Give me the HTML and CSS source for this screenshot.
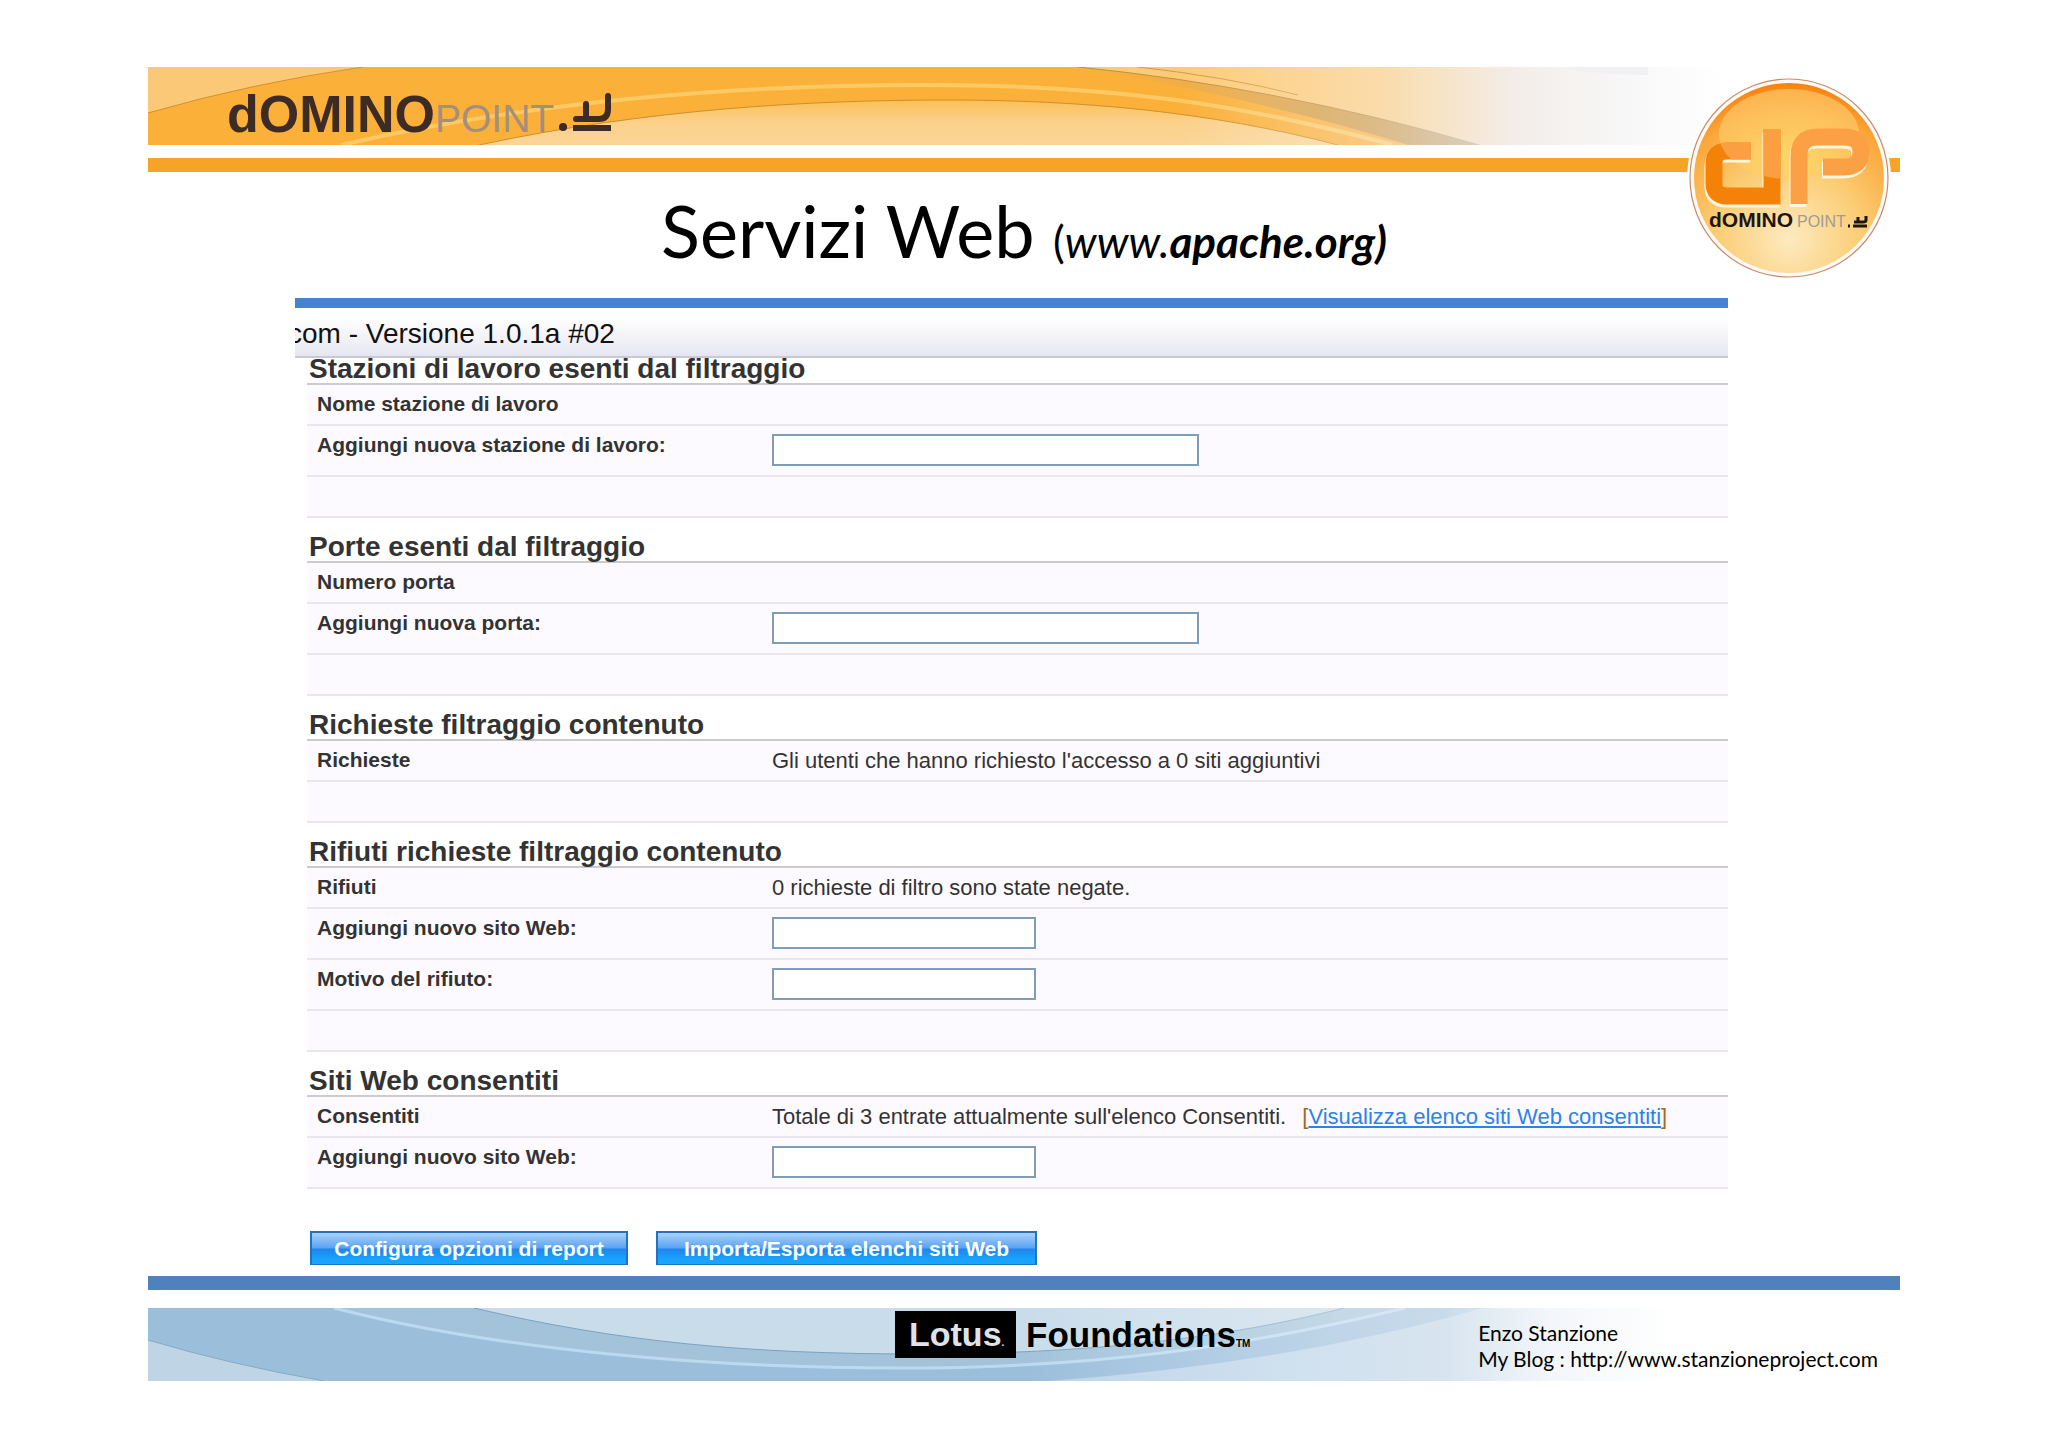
FILE: index.html
```html
<!DOCTYPE html>
<html lang="it">
<head>
<meta charset="utf-8">
<title>Servizi Web</title>
<link rel="stylesheet" href="styles.css">
</head>
<body>
<div class="slide">
  <header class="masthead">
    <div class="banner">
      <svg class="waves" viewBox="0 0 1752 78" preserveAspectRatio="none" aria-hidden="true">
        <defs>
          <linearGradient id="fadeTop" x1="0" x2="1752" y1="0" y2="0" gradientUnits="userSpaceOnUse">
            <stop offset=".59" stop-color="#fff" stop-opacity="0"/>
            <stop offset=".7" stop-color="#f6f2f0" stop-opacity=".4"/>
            <stop offset=".78" stop-color="#f1f0f3" stop-opacity=".92"/>
            <stop offset=".86" stop-color="#fafafb" stop-opacity="1"/>
            <stop offset=".9" stop-color="#fff"/>
          </linearGradient>
          <linearGradient id="under" x1="0" x2="0" y1="0" y2="1">
            <stop offset="0" stop-color="#fcbf58"/>
            <stop offset=".5" stop-color="#fbd18b"/>
            <stop offset="1" stop-color="#fad596"/>
          </linearGradient>
          <linearGradient id="band" x1="0" x2="1" y1="0" y2="0">
            <stop offset="0" stop-color="#c9a468" stop-opacity="0"/>
            <stop offset=".6" stop-color="#bba27a" stop-opacity=".45"/>
            <stop offset="1" stop-color="#b9b5b0" stop-opacity=".45"/>
          </linearGradient>
        </defs>
        <rect width="1752" height="78" fill="#fbb03a"/>
        <path d="M0 0H215Q104 16 0 46Z" fill="#fbc877"/>
        <path d="M0 46Q104 16 215 0" fill="none" stroke="#cf9333"/>
        <path d="M930 0Q1130 20 1332 78H1752V0Z" fill="#fdcb78"/>
        <path d="M331 78C500 42 660 33 800 33C930 33 1060 44 1190 78Z" fill="url(#under)"/>
        <path d="M331 78C500 42 660 33 800 33C930 33 1060 44 1190 78" fill="none" stroke="#cc902c"/>
        <path d="M193 78C420 26 640 18 780 18C960 18 1090 36 1245 78" fill="none" stroke="#fdc964" stroke-width="4"/>
        <path d="M930 0Q1130 20 1332 78" fill="none" stroke="#bf8f42"/>
        <path d="M990 0Q1080 10 1150 28" fill="none" stroke="#d19b45"/>
        <rect width="1752" height="78" fill="url(#fadeTop)"/>
        <path d="M930 0Q1130 20 1332 78H1260Q1120 34 930 0Z" fill="url(#band)"/>
        <path d="M1405 0H1500V8Q1450 8 1405 0Z" fill="#f1f1f4"/>
      </svg>
      <div class="wordmark">
        <span class="word-strong">dOMINO</span><span class="word-light">POINT</span>
        <svg class="tld" viewBox="0 0 54 40" aria-label="it" role="img">
          <g fill="none" stroke="#3d2b26" stroke-width="6" stroke-linecap="round">
            <path d="M50 4V17Q50 27 41 27H18M28 12V26"/>
            <path d="M15 36H53" stroke-linecap="butt"/>
            <path d="M5 35H5.1" stroke-width="8"/>
          </g>
        </svg>
      </div>
    </div>
    <div class="rule rule-orange"></div>
    <svg class="emblem" viewBox="0 0 220 220" role="img" aria-label="dominopoint">
      <defs>
        <radialGradient id="disc" cx=".5" cy=".82" r=".85">
          <stop offset="0" stop-color="#fdeac0"/>
          <stop offset=".45" stop-color="#fbcd74"/>
          <stop offset=".8" stop-color="#fba63a"/>
          <stop offset="1" stop-color="#f77a05"/>
        </radialGradient>
        <radialGradient id="gloss" cx=".5" cy=".75" r=".8">
          <stop offset="0" stop-color="#ffd96a"/>
          <stop offset="1" stop-color="#fdbb5c"/>
        </radialGradient>
        <clipPath id="glossClip"><ellipse cx="109" cy="64" rx="70" ry="45"/></clipPath>
      </defs>
      <circle cx="109" cy="108" r="102" fill="#fff"/>
      <circle cx="109" cy="108" r="99" fill="#fffaf5" stroke="#c98a6c" stroke-width="1.2"/>
      <circle cx="109" cy="108" r="95" fill="url(#disc)"/>
      <ellipse cx="109" cy="64" rx="70" ry="45" fill="url(#gloss)" opacity=".8"/>
      <g fill="none" stroke-width="17">
        <g stroke="#fff6e0" transform="translate(-1 3)">
          <path d="M71 81H47Q34 81 34 94V113Q34 126 47 126H92V59"/>
          <path d="M119 134V86Q119 67 138 67H164Q181 67 181 82Q181 97 164 97H143"/>
        </g>
        <path d="M71 81H47Q34 81 34 94V113Q34 126 47 126H92V59" stroke="#f58208"/>
        <path d="M119 134V86Q119 67 138 67H164Q181 67 181 82Q181 97 164 97H143" stroke="#fba045"/>
        <path d="M71 81H47Q34 81 34 94V113Q34 126 47 126H92V59" stroke="#fb9f42" clip-path="url(#glossClip)"/>
      </g>
      <text class="emblem-strong" x="29" y="157">dOMINO</text>
      <text class="emblem-light" x="117" y="157">POINT</text>
      <path d="M186 146V150Q186 152 183 152H174M178 147V152M173 156H187M168 156H170" fill="none" stroke="#1d1512" stroke-width="3"/>
    </svg>
  </header>

  <h1 class="title">Servizi Web <span class="title-site"><span class="paren">(</span>www.<b>apache.org)</b></span></h1>

  <main class="panel">
    <div class="strip"></div>
    <div class="version">com - Versione 1.0.1a #02</div>
    <form class="form">
      <section class="group group-first">
        <h2>Stazioni di lavoro esenti dal filtraggio</h2>
        <table>
          <tr><th scope="row">Nome stazione di lavoro</th><td></td></tr>
          <tr class="tall"><th scope="row"><label for="station">Aggiungi nuova stazione di lavoro:</label></th><td><input class="wide" id="station" type="text"></td></tr>
          <tr><td colspan="2"></td></tr>
        </table>
      </section>
      <section class="group">
        <h2>Porte esenti dal filtraggio</h2>
        <table>
          <tr><th scope="row">Numero porta</th><td></td></tr>
          <tr class="tall"><th scope="row"><label for="port">Aggiungi nuova porta:</label></th><td><input class="wide" id="port" type="text"></td></tr>
          <tr><td colspan="2"></td></tr>
        </table>
      </section>
      <section class="group">
        <h2>Richieste filtraggio contenuto</h2>
        <table>
          <tr><th scope="row">Richieste</th><td>Gli utenti che hanno richiesto l'accesso a 0 siti aggiuntivi</td></tr>
          <tr><td colspan="2"></td></tr>
        </table>
      </section>
      <section class="group">
        <h2>Rifiuti richieste filtraggio contenuto</h2>
        <table>
          <tr><th scope="row">Rifiuti</th><td>0 richieste di filtro sono state negate.</td></tr>
          <tr class="tall"><th scope="row"><label for="denied">Aggiungi nuovo sito Web:</label></th><td><input id="denied" type="text"></td></tr>
          <tr class="tall"><th scope="row"><label for="reason">Motivo del rifiuto:</label></th><td><input id="reason" type="text"></td></tr>
          <tr><td colspan="2"></td></tr>
        </table>
      </section>
      <section class="group">
        <h2>Siti Web consentiti</h2>
        <table>
          <tr><th scope="row">Consentiti</th><td>Totale di 3 entrate attualmente sull'elenco Consentiti. <span class="bracket">[<a href="#consentiti">Visualizza elenco siti Web consentiti</a>]</span></td></tr>
          <tr class="tall"><th scope="row"><label for="allowed">Aggiungi nuovo sito Web:</label></th><td><input id="allowed" type="text"></td></tr>
        </table>
      </section>
      <div class="actions">
        <button class="btn-report" type="button">Configura opzioni di report</button>
        <button class="btn-import" type="button">Importa/Esporta elenchi siti Web</button>
      </div>
    </form>
  </main>

  <div class="rule rule-blue"></div>
  <footer class="footer">
    <svg class="waves" viewBox="0 0 1752 73" preserveAspectRatio="none" aria-hidden="true">
      <defs>
        <linearGradient id="fadeBottom" x1="0" x2="1752" y1="0" y2="0" gradientUnits="userSpaceOnUse">
          <stop offset=".5" stop-color="#fff" stop-opacity="0"/>
          <stop offset=".74" stop-color="#eef2f7" stop-opacity=".55"/>
          <stop offset=".8" stop-color="#f6f8fb" stop-opacity=".95"/>
          <stop offset=".87" stop-color="#fff"/>
        </linearGradient>
      </defs>
      <rect width="1752" height="73" fill="#9bbedb"/>
      <path d="M0 32Q80 56 176 73H0Z" fill="#bfd5e6"/>
      <path d="M0 32Q80 56 176 73" fill="none" stroke="#86abc4"/>
      <path d="M186 0C350 42 560 60 752 60C950 60 1100 38 1257 0Z" fill="#a3c3da"/>
      <path d="M326 0C470 34 600 46 770 46C940 46 1080 30 1196 0Z" fill="#c9dcea"/>
      <path d="M900 73Q1140 56 1335 0H1752V73Z" fill="#bcd4e8"/>
      <path d="M186 0C350 42 560 60 752 60C950 60 1100 38 1257 0" fill="none" stroke="#bbdaf0" stroke-width="3"/>
      <path d="M326 0C470 34 600 46 770 46C940 46 1080 30 1196 0" fill="none" stroke="#79a3bf"/>
      <rect width="1752" height="73" fill="url(#fadeBottom)"/>
    </svg>
    <div class="lotus"><span class="lotus-box">Lotus<small>.</small></span><span class="foundations">Foundations<small>TM</small></span></div>
    <address class="contact">Enzo Stanzione<br>My Blog : http://www.stanzioneproject.com</address>
  </footer>
</div>
</body>
</html>
```
FILE: styles.css
```css
* {
  box-sizing: border-box;
}

body {
  margin: 0;
  background: #fff;
  color: #333;
  font-family: "Liberation Sans", Arial, sans-serif;
}

.slide {
  padding: 67px 148px;
}

/* Masthead */
.masthead {
  position: relative;
}

.banner {
  position: relative;
  height: 78px;
}

.waves {
  position: absolute;
  inset: 0;
  width: 100%;
  height: 100%;
}

.wordmark {
  position: relative;
  display: flex;
  align-items: baseline;
  padding: 19px 0 0 79px;
  line-height: 56px;
}

.word-strong {
  color: #3d2b26;
  font-size: 52px;
  font-weight: 700;
}

.word-light {
  color: #a38f7c;
  font-size: 39px;
}

.tld {
  width: 54px;
  height: 40px;
  margin-left: 4px;
}

.rule {
  height: 14px;
}

.rule-orange {
  margin-top: 13px;
  background: #f6a428;
}

.rule-blue {
  margin-top: 11px;
  background: #4f81bd;
}

.emblem {
  position: absolute;
  top: 3px;
  right: 0;
  width: 220px;
  height: 220px;
}

.emblem-strong {
  fill: #1d1512;
  font-size: 21px;
  font-weight: 700;
}

.emblem-light {
  fill: #a39a90;
  font-size: 16px;
}

/* Slide title */
.title {
  margin: 0;
  padding-top: 16px;
  height: 126px;
  color: #000;
  font: 400 72px/84px Lato, Carlito, sans-serif;
  text-align: center;
}

.title-site {
  font-size: 44px;
  font-style: italic;
}

.paren {
  font-style: normal;
}

/* Administration panel */
.panel {
  margin: 0 172px 0 147px;
}

.strip {
  height: 10px;
  background: #4583d2;
}

.version {
  height: 50px;
  overflow: hidden;
  border-bottom: 2px solid #c9c9d4;
  background: linear-gradient(#fff 20%, #f3f3f7 60%, #e6e6f3);
  color: #111;
  font-size: 28px;
  line-height: 52px;
  text-indent: -7px;
  white-space: nowrap;
}

.form {
  padding-left: 12px;
}

.group h2 {
  display: flex;
  align-items: flex-end;
  height: 45px;
  margin: 0;
  padding: 0 0 0 2px;
  border-bottom: 2px solid #cbcbcb;
  font-size: 28px;
  line-height: 28px;
  white-space: nowrap;
}

.group-first h2 {
  height: 27px;
}

.group table {
  width: 100%;
  border-collapse: separate;
  border-spacing: 0;
  table-layout: fixed;
}

.group th,
.group td {
  height: 41px;
  padding: 7px 0 0 10px;
  border-bottom: 2px solid #e9e6ec;
  background: #fdfaff;
  font-size: 22px;
  line-height: 24px;
  text-align: left;
  vertical-align: top;
  white-space: nowrap;
}

.group td {
  padding: 8px 0 0 11px;
}

.group th {
  width: 454px;
  font-size: 21px;
}

.group .tall th,
.group .tall td {
  height: 51px;
}

.group input {
  display: block;
  width: 264px;
  height: 32px;
  border: 2px solid #7f9db9;
  background: #fff;
}

.group input.wide {
  width: 427px;
}

.bracket {
  margin-left: 10px;
  color: #a06a20;
}

.bracket a {
  color: #2a83ea;
}

.actions {
  display: flex;
  gap: 28px;
  margin-top: 42px;
  padding-left: 3px;
}

.actions button {
  height: 34px;
  padding: 0;
  border: 2px solid #2272c4;
  border-bottom-width: 1px;
  background: linear-gradient(#a9d2fb, #5aa3f3 48%, #1f86ea 52%, #18a4ff 85%);
  color: #fff;
  font: 700 21px/28px "Liberation Sans", Arial, sans-serif;
  white-space: nowrap;
}

.btn-report {
  width: 318px;
}

.btn-import {
  width: 381px;
}

/* Footer */
.footer {
  position: relative;
  display: flex;
  align-items: flex-start;
  height: 73px;
  margin-top: 18px;
}

.lotus {
  position: relative;
  display: flex;
  margin: 3px 0 0 747px;
  color: #000;
  font-size: 34px;
  font-weight: 700;
  line-height: 47px;
}

.lotus-box {
  width: 121px;
  height: 47px;
  margin-right: 10px;
  padding-left: 14px;
  background: #000;
  color: #dfe3e8;
}

.foundations {
  font-size: 35px;
}

.lotus small {
  font-size: 10px;
  line-height: 10px;
}

.contact {
  position: relative;
  margin-left: auto;
  padding: 12px 22px 0 0;
  color: #000;
  font: 400 21px/26px Lato, Carlito, sans-serif;
  white-space: nowrap;
}
```
